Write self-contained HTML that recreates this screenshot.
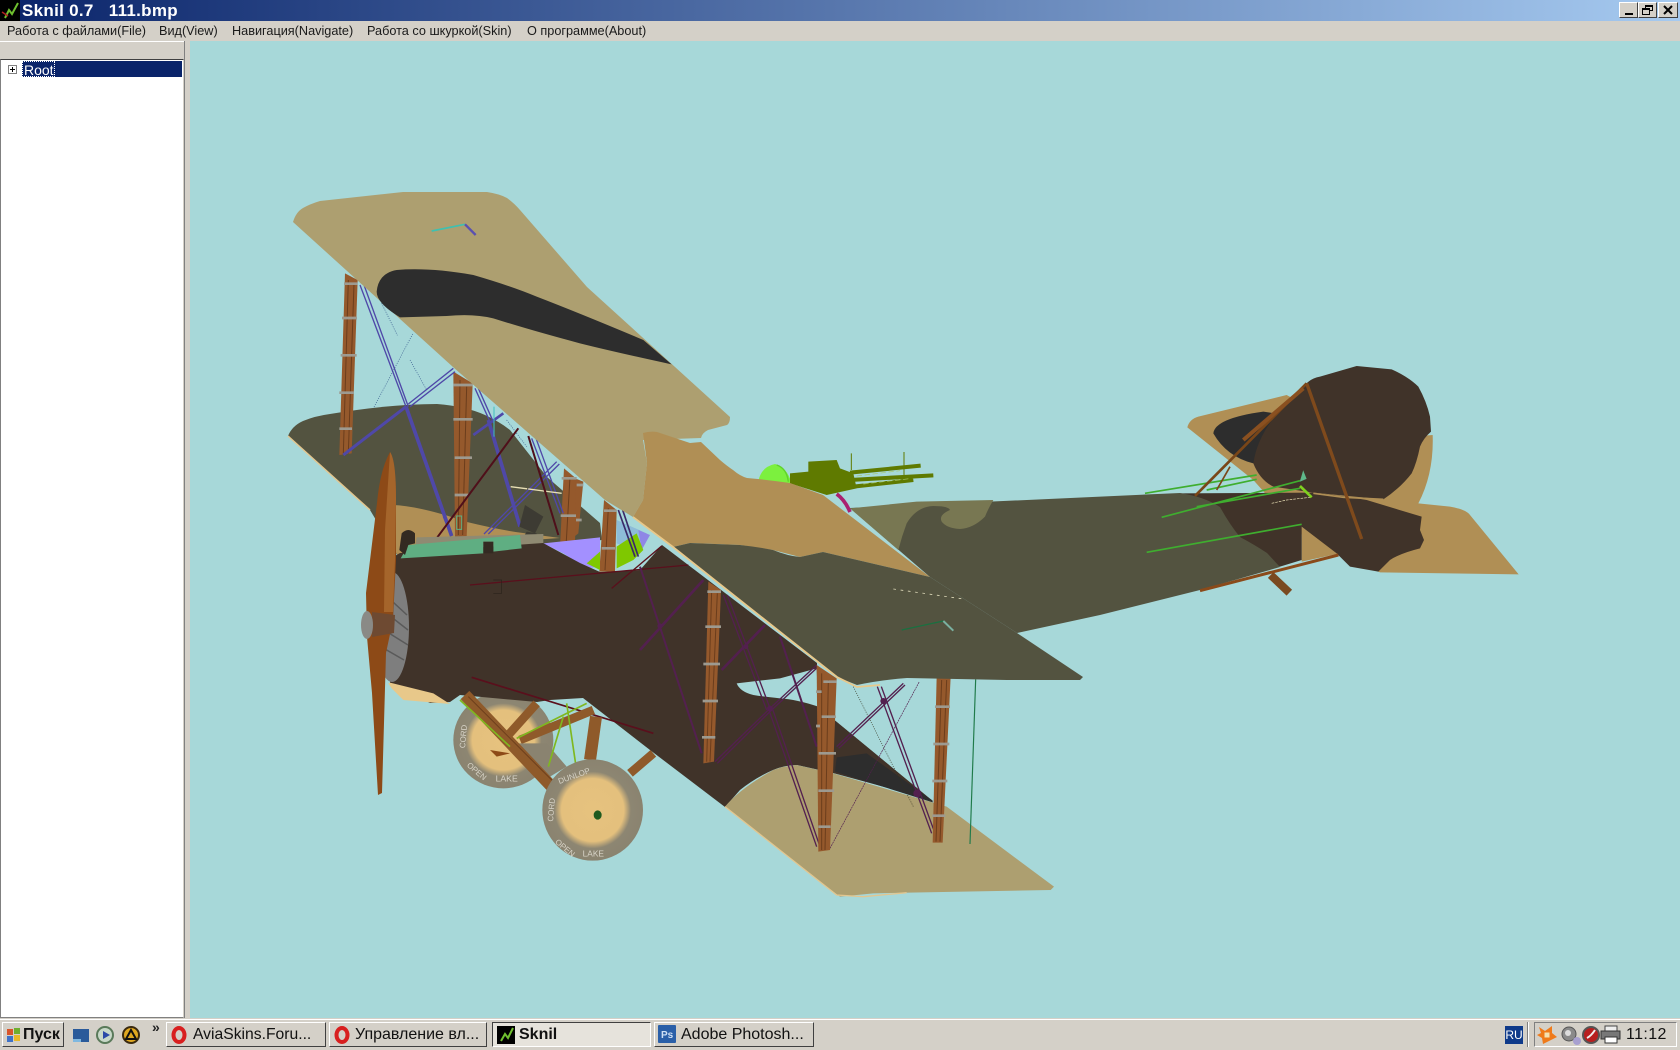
<!DOCTYPE html>
<html lang="ru"><head><meta charset="utf-8"><title>Sknil 0.7</title>
<style>
html,body{margin:0;padding:0;width:1680px;height:1050px;overflow:hidden;background:#d4d0c8;font-family:"Liberation Sans","DejaVu Sans",sans-serif}
.a{position:absolute;white-space:nowrap}
#title{left:0;top:0;width:1680px;height:21px}
#title b{position:absolute;left:22px;top:1px;color:#fff;font-size:17px;letter-spacing:.3px;line-height:20px;white-space:pre}
.wb{position:absolute;top:2px;width:19px;height:16px;background:#d4d0c8;border:1px solid;border-color:#fff #404040 #404040 #fff;box-sizing:border-box}
.m{position:absolute;top:22px;font-size:12.7px;line-height:18px;color:#1a1a1a}
.task{position:absolute;top:1022px;height:25px;box-sizing:border-box;background:#d4d0c8;border:1px solid;border-color:#fff #404040 #404040 #fff;font-size:16px;line-height:24px;color:#111;white-space:nowrap}
.task span{position:absolute;top:0}
</style></head><body>
<svg class="a" style="left:0;top:0" width="1680" height="1050" viewBox="0 0 1680 1050" xmlns="http://www.w3.org/2000/svg">
<rect x="190" y="41" width="1490" height="977" fill="#a7d8d9"/>

<!-- tail far stabiliser + fin -->
<g transform="translate(1100 340) scale(.33333)">
<path d="M262 262Q268 238 295 230L560 165L800 300L998 285Q1002 400 955 490L1050 500Q1098 508 1110 525L1256 703L840 697L700 640L605 560L620 600L460 420Z" fill="#b08f55"/>
<path d="M605 560L710 642L605 665Z" fill="#b08f55"/>
<path d="M340 280Q345 235 490 215L525 220L460 370Q380 350 340 280Z" fill="#2d2d2d"/>
<path d="M460 370Q470 300 520 235Q565 180 610 140Q630 115 660 110L770 78L875 88Q925 110 955 140Q980 185 990 230L993 275Q970 295 960 320Q950 370 935 400Q900 445 850 478L640 458L520 440Q480 420 460 370Z" fill="#403329"/>
<path d="M240 460L640 458Q730 468 800 480L965 530L960 570L972 600L960 625Q900 640 870 660L835 695L750 680L710 640L605 560L605 660L540 680L300 560Z" fill="#403329"/>
<path d="M640 460L730 472L850 478" fill="none" stroke="#b08f55" stroke-width="5"/>
</g>

<!-- gun + sphere -->
<g transform="translate(640 420) scale(.33333)">
<path d="M356 180Q365 140 405 132Q440 140 455 190L356 190Z" fill="#7cf03e"/>
<path d="M410 135Q440 145 445 185" fill="none" stroke="#5fd22a" stroke-width="4"/>
<path d="M450 160L505 155L505 125L590 120L600 145L640 160L650 205L560 225L450 190Z" fill="#5f7a00"/>
<path d="M630 158L842 137M630 180L880 166M640 200L820 180" stroke="#5f7a00" stroke-width="12" fill="none"/>
<path d="M792 96V180M634 100V150" stroke="#5f7a00" stroke-width="3" fill="none"/>
<path d="M650 168L780 152M670 192L810 176" stroke="#a7c86c" stroke-width="2" stroke-dasharray="16 8" fill="none"/>
<path d="M590 222Q615 240 630 276" stroke="#aa2070" stroke-width="11" fill="none"/>
</g>

<!-- rear fuselage olive -->
<path d="M850 508L1180 493Q1205 497 1220 507Q1230 525 1240 537Q1255 545 1267 553L1280 567L1200 590L1100 615L1017 633L930 577Z" fill="#535340"/>
<g transform="translate(640 420) scale(.33333)">
<path d="M630 265L830 245L1060 240Q1045 265 1035 290Q1000 325 960 327Q920 325 905 305Q895 285 930 270Q925 258 880 258Q830 260 800 310Q785 350 775 390Z" fill="#787752"/>
</g>
<!-- tail lines -->
<g transform="translate(1100 340) scale(.33333)" fill="none" stroke-linecap="butt">
<path d="M135 460L470 405M320 450L470 418M185 532L600 422M290 500L600 445M140 637L605 553" stroke="#3fae2f" stroke-width="5"/>
<path d="M600 438L635 472" stroke="#7fd01f" stroke-width="8"/>
<path d="M610 400L616 415L604 420Z" fill="#5fb88a" stroke="#5fb88a" stroke-width="6"/>
<path d="M515 490L560 480L630 472" stroke="#e8dfb5" stroke-width="2" stroke-dasharray="8 3"/>
<path d="M285 468L620 130" stroke="#7a4618" stroke-width="8"/>
<path d="M430 300L610 145" stroke="#8a5020" stroke-width="12"/>
<path d="M350 450L390 380" stroke="#7a4618" stroke-width="5"/>
<path d="M620 130L785 597" stroke="#7f4a1c" stroke-width="10"/>
<path d="M512 705L568 758" stroke="#7a4a20" stroke-width="24"/>
<path d="M300 752L715 645" stroke="#8a4a1a" stroke-width="9"/>
</g>

<!-- far lower wing -->
<path d="M288 436Q292 426 303 421Q315 416 330 414Q390 404 437 404Q465 406 485 415Q500 422 510 430L547 477L600 523L602 540L400 560L370 510Z" fill="#535340"/>
<path d="M288 436L370 510" stroke="#e2c68f" stroke-width="1.5"/>
<path d="M393 505Q420 506 467 522Q500 530 523 533L560 538L463 545L400 560L393 547Z" fill="#b08f55"/>

<!-- far struts + wires -->
<g transform="translate(280 180) scale(.33333)">
<g fill="#95592c">
<path d="M195 280L233 300L215 820L178 825Z"/>
<path d="M520 575L578 610L560 1070L525 1070Z"/>
<path d="M885 895L910 905L895 1060L870 1080Z"/>
<path d="M852 865L888 895L885 1100L840 1100Z"/>
<path d="M972 960L1010 990L1005 1175L958 1175Z"/>
</g>
<path d="M205 300L190 820M222 310L205 820M540 600L535 1065M560 620L548 1065M870 890L858 1100M985 985L975 1170" stroke="#6b3d1c" stroke-width="3" fill="none"/>
<path d="M192 311H233M186 414H231M182 526H230M178 638H222M178 746H216M520 615H578M520 718H578M524 833H576M524 945H565M845 895H890M842 1007H888M840 1108H885M890 915H910M888 1020H905M972 992H1010M965 1105H1005" stroke="#9d9a90" stroke-width="8" fill="none"/>
<g fill="none" stroke="#4f48a8">
<path d="M240 315L378 680M252 315L385 680" stroke-width="4"/>
<path d="M378 680L515 1068" stroke-width="11"/>
<path d="M378 680L190 825" stroke-width="9"/>
<path d="M385 672L520 565M390 680L525 575" stroke-width="4"/>
<path d="M585 625L632 730M595 625L642 730" stroke-width="4"/>
<path d="M625 720L720 1040" stroke-width="11"/>
<path d="M580 765L670 700" stroke-width="8"/>
<path d="M612 1062L830 845M625 1062L838 852" stroke-width="4"/>
<path d="M755 775L840 1000M768 775L850 1000" stroke-width="4"/>
<path d="M490 1010L515 1068" stroke-width="4"/>
<path d="M305 370L352 466M398 462L280 685M390 540L440 630M680 720L740 800" stroke="#33558a" stroke-width="2" stroke-dasharray="3 4"/>
</g>
<path d="M642 680V770" stroke="#3fc0c0" stroke-width="3"/>
<path d="M692 920L845 940" stroke="#e8dfb5" stroke-width="4" stroke-dasharray="50 3"/>
<path d="M715 745L472 1072M745 768L835 1065" stroke="#4f0f1a" stroke-width="6" fill="none"/>
<path d="M735 975L790 1010L765 1060L718 1040Z" fill="#3d3b33"/>
<path d="M728 1075L740 1055L770 1060L770 1075Z" fill="#3d3b33"/>
<path d="M530 1008L545 1008V1048H530Z" fill="none" stroke="#5fae82" stroke-width="3"/>
<path d="M790 1090L960 1072L960 1160L920 1165L850 1120Z" fill="#a390ff"/>
<path d="M920 1150L960 1115V1170Z" fill="#7fc800"/>
<path d="M1010 1020L1100 1060L1060 1110L1010 1090Z" fill="#8dbcd8"/>
<path d="M1075 1050L1110 1065L1085 1110Z" fill="#8f86e6"/>
<path d="M1010 1100L1070 1060L1090 1110L1060 1140L1010 1165Z" fill="#7fc800"/>
<path d="M1015 990L1065 1130M1028 990L1075 1130" stroke="#3a2a68" stroke-width="5" fill="none"/>
<path d="M410 1072L790 1062L790 1090L400 1130Z" fill="#8f8a72"/>
</g>

<!-- back wheel -->
<g transform="translate(350 560) scale(.33333)">
<defs><radialGradient id="w0" cx=".5" cy=".5" r=".5"><stop offset="0" stop-color="#e6c27e"/><stop offset=".62" stop-color="#e4c07d"/><stop offset=".76" stop-color="#8d8672"/><stop offset="1" stop-color="#8a8370"/></radialGradient></defs>
<ellipse cx="460" cy="540" rx="150" ry="145" fill="url(#w0)"/>
<text x="470" y="665" font-size="26" fill="#d8d4c8" text-anchor="middle" font-family="Liberation Sans">LAKE</text>
</g>

<!-- fuselage / near lower wing brown -->
<path d="M393 557L400 553L543 543L580 563L600 572L640 570L662 545L817 663L817 707L837 722L932 800L833 773L797 765Q785 765 773 770Q755 778 740 790L725 807L650 750L583 698L550 700L537 702L460 695L450 702L430 703L410 693L390 683Z" fill="#403329"/>
<g transform="translate(640 420) scale(.33333)">
<path d="M290 790L420 775L530 745L535 860Q470 838 420 835Q370 830 340 825Q300 815 290 790Z" fill="#a7d8d9"/>
<path d="M590 790L930 790L875 1140L590 905Z" fill="#a7d8d9"/>
<path d="M255 1160Q300 1105 400 1050Q430 1038 470 1035L580 1060L920 1160L1242 1400L1232 1410L700 1420L600 1430L560 1400Z" fill="#ad9f70"/>
<path d="M255 1160L590 1425L670 1430L800 1418" stroke="#e2c68f" stroke-width="4" fill="none"/>
<path d="M585 1055L590 1012L680 1000L878 1142L878 1147Z" fill="#2d2d2d"/>
</g>

<!-- instrument strip -->
<g transform="translate(280 180) scale(.33333)">
<path d="M385 1095L720 1065L725 1105L640 1115L640 1085L610 1085L610 1120L362 1135Z" fill="#5fae82"/>
<path d="M365 1060Q385 1040 405 1060V1090L385 1095L375 1125L358 1110Z" fill="#332a22"/>
<path d="M610 1085H640V1120H610Z" fill="#332a22"/>
<path d="M570 1215L1225 1155M995 1225L1145 1098" stroke="#5a0f1c" stroke-width="4" fill="none"/>
<path d="M640 1200H665V1240H640" stroke="#2b231b" stroke-width="2" fill="none"/>
</g>

<!-- near struts + wires -->
<g transform="translate(640 420) scale(.33333)">
<g fill="none" stroke="#53204f">
<path d="M0 440L185 1000" stroke-width="6"/>
<path d="M190 480L0 690" stroke-width="8"/>
<path d="M375 615L245 750" stroke-width="8"/>
<path d="M250 525L380 870M262 525L392 870" stroke-width="4"/>
<path d="M385 865L530 1280M397 865L540 1280" stroke-width="4"/>
<path d="M420 650L530 980" stroke-width="6"/>
<path d="M225 1025L390 865L530 735M232 1030L395 870L535 740" stroke-width="4"/>
<path d="M590 980L790 790M596 985L795 795" stroke-width="4"/>
<path d="M712 800L875 1240M724 800L885 1240" stroke-width="4"/>
<path d="M570 1285L838 785" stroke-width="2" stroke-dasharray="6 2"/>
<path d="M640 800L820 1160" stroke="#33331f" stroke-width="2" stroke-dasharray="3 4"/>
</g>
<circle cx="730" cy="843" r="9" fill="#53204f"/>
<circle cx="390" cy="866" r="9" fill="#53204f"/>
<circle cx="60" cy="618" r="8" fill="#53204f"/>
<circle cx="318" cy="680" r="7" fill="#53204f"/>
<circle cx="832" cy="1120" r="12" fill="#53204f"/>
<g fill="#95592c">
<path d="M205 485L243 510L222 1025L190 1030Z"/>
<path d="M530 735L590 775L570 1290L535 1295Z"/>
<path d="M890 770L932 770L908 1268L878 1268Z"/>
</g>
<path d="M215 510L200 1025M232 520L210 1025M545 760L545 1290M565 780L555 1290M905 780L888 1265M920 780L900 1265" stroke="#6b3d1c" stroke-width="3" fill="none"/>
<path d="M202 515H243M196 620H243M190 732H240M188 843H234M186 952H226M550 785H590M545 890H588M536 1000H588M535 1112H582M535 1220H572M528 815H545M528 918H540M885 860H930M880 972H928M877 1083H922M877 1187H916" stroke="#9d9a90" stroke-width="8" fill="none"/>
<path d="M1007 778L990 1272" stroke="#1f7a4a" stroke-width="3.5"/>
</g>

<!-- upper wing -->
<path d="M293 222Q296 212 303 208Q310 204 320 201L403 192L487 192Q500 194 507 198Q514 203 520 210L587 287L730 417Q730 423 727 425L708 430Q702 433 701 438L643 440L647 463L643 500L633 517L605 500L453 367Z" fill="#ad9f70"/>
<path d="M643 433Q650 431 657 432L690 443L701 442L720 460Q727 466 733 470Q740 476 747 478Q770 480 790 483L823 495L930 577L823 552L800 557L773 550L740 545L690 543L673 547L633 517L643 500L647 463Z" fill="#b08f55"/>
<path d="M673 547L690 543L740 545Q758 547 773 550Q788 556 800 557L823 552L930 577L1017 633L1083 677L1080 680L1007 680L907 678Q880 680 857 685L837 677Z" fill="#535340"/>
<path d="M633 517L673 547L837 677L857 687L880 685" stroke="#e8c88a" stroke-width="1.8" fill="none"/>
<g transform="translate(280 180) scale(.33333)">
<path d="M290 335Q295 280 350 270Q450 262 580 285Q700 320 770 350Q900 400 1090 480L1175 553Q1000 515 900 490Q750 450 640 415Q580 400 500 408L360 412Q290 370 290 335Z" fill="#2d2d2d"/>
<path d="M455 153L555 133" stroke="#3fc0b0" stroke-width="5"/>
<path d="M555 133L587 165" stroke="#5a50b0" stroke-width="7"/>
</g>
<g transform="translate(640 420) scale(.33333)">
<path d="M760 507L970 537" stroke="#dcd8b8" stroke-width="2.5" stroke-dasharray="8 14"/>
<path d="M785 630L910 603" stroke="#1a7040" stroke-width="4"/>
<path d="M910 603L940 632" stroke="#7ab0a0" stroke-width="6"/>
</g>

<!-- lower nose + gear + front wheel -->
<g transform="translate(350 560) scale(.33333)">
<path d="M115 370L125 385L160 420L300 432L250 400L120 368Z" fill="#e8c88a"/>
<path d="M365 352L910 520" stroke="#5a0f1c" stroke-width="5"/>
<path d="M840 640L910 580" stroke="#8f5a2a" stroke-width="26"/>
<path d="M720 600L738 470" stroke="#8f5a2a" stroke-width="36"/>
<path d="M510 540L730 450" stroke="#8f5a2a" stroke-width="26"/>
<path d="M475 525L560 430" stroke="#8f5a2a" stroke-width="26"/>
<path d="M470 550L590 550L650 620L600 650Z" fill="#8a8370"/>
<path d="M345 405L605 680" stroke="#8f5a2a" stroke-width="36"/>
<path d="M355 410L615 670" stroke="#6d3f1c" stroke-width="3"/>
<path d="M420 570L480 580L440 590Z" fill="#8d4a17"/>
<path d="M330 420L480 560M500 535L710 430M650 430L677 612M640 470L595 620" stroke="#7fb81f" stroke-width="5" fill="none"/>
<ellipse cx="728" cy="750" rx="151" ry="152" fill="url(#w0)"/>
<ellipse cx="743" cy="765" rx="12" ry="14" fill="#1f5a1f"/>
<text x="730" y="890" font-size="25" fill="#d8d4c8" text-anchor="middle" font-family="Liberation Sans">LAKE</text>
<text x="640" y="870" font-size="24" fill="#d8d4c8" text-anchor="middle" transform="rotate(40 640 870)" font-family="Liberation Sans">OPEN</text>
<text x="612" y="750" font-size="24" fill="#d8d4c8" text-anchor="middle" transform="rotate(-85 612 750)" font-family="Liberation Sans">CORD</text>
<text x="675" y="655" font-size="24" fill="#d8d4c8" text-anchor="middle" transform="rotate(-20 675 655)" font-family="Liberation Sans">DUNLOP</text>
<text x="375" y="640" font-size="24" fill="#d8d4c8" text-anchor="middle" transform="rotate(40 375 640)" font-family="Liberation Sans">OPEN</text>
<text x="348" y="530" font-size="24" fill="#d8d4c8" text-anchor="middle" transform="rotate(-85 348 530)" font-family="Liberation Sans">CORD</text>
</g>

<!-- engine disc + prop -->
<ellipse cx="392" cy="627" rx="17" ry="55" fill="#7e7e7e"/>
<path d="M380 590L407 615M376 605L408 630M376 625L408 645M378 645L404 660" stroke="#5a5a5a" stroke-width="1.5" fill="none"/>
<path d="M390 452Q396 460 396 500L396 560L393 620L386 653L382 793L378 795L372 693L367 637L366 593L377 503Q380 470 390 452Z" fill="#8d4a17"/>
<path d="M390 452Q396 460 396 500L395 560L393 612L384 612L385 530Z" fill="#a5652b"/>
<path d="M372 612L395 615L394 633L372 637Z" fill="#6e4a32"/>
<ellipse cx="367" cy="625" rx="6" ry="14" fill="#8a8a86"/>
</svg>

<div class="a" id="title" style="background:linear-gradient(90deg,#0a246a 0%,#a6caf0 100%)"><svg class="a" style="left:0;top:0" width="20" height="21"><rect width="20" height="21" fill="#000"/><path d="M5 18L9 10L12 14L18 3" stroke="#6fc02f" stroke-width="2" fill="none"/><path d="M2 12L8 16" stroke="#b02020" stroke-width="1.5"/></svg><b>Sknil 0.7   111.bmp</b>
<div class="wb" style="left:1619px"><div class="a" style="left:5px;top:10px;width:8px;height:2px;background:#000"></div></div>
<div class="wb" style="left:1638px"><div class="a" style="left:6px;top:2px;width:8px;height:6px;border:1px solid #000;border-top-width:2px;box-sizing:border-box"></div><div class="a" style="left:3px;top:5px;width:8px;height:7px;border:1px solid #000;border-top-width:2px;box-sizing:border-box;background:#d4d0c8"></div></div>
<div class="wb" style="left:1658px;width:20px"><svg class="a" style="left:4px;top:2px" width="10" height="10"><path d="M1 1L9 9M9 1L1 9" stroke="#000" stroke-width="2"/></svg></div>
</div>

<span class="m" style="left:7px">Работа с файлами(File)</span>
<span class="m" style="left:159px">Вид(View)</span>
<span class="m" style="left:232px">Навигация(Navigate)</span>
<span class="m" style="left:367px">Работа со шкуркой(Skin)</span>
<span class="m" style="left:527px">О программе(About)</span>

<div class="a" style="left:0;top:41px;width:185px;height:1px;background:#fff"></div>
<div class="a" style="left:184px;top:41px;width:1px;height:977px;background:#808080"></div>
<div class="a" style="left:0;top:59px;width:184px;height:959px;background:#fff;box-sizing:border-box;border:1px solid;border-color:#404040 #d4d0c8 #808080 #808080"></div>
<div class="a" style="left:22px;top:61px;width:160px;height:16px;background:#0a246a"></div>
<div class="a" style="left:22px;top:61px;width:33px;height:16px;box-sizing:border-box;border:1px dotted #fff"></div>
<span class="a" style="left:24px;top:62px;color:#fff;font-size:14px;line-height:16px">Root</span>
<div class="a" style="left:8px;top:65px;width:9px;height:9px;box-sizing:border-box;border:1px solid #808080;background:#fff"></div>
<div class="a" style="left:10px;top:69px;width:5px;height:1px;background:#000"></div>
<div class="a" style="left:12px;top:67px;width:1px;height:5px;background:#000"></div>

<!-- taskbar -->
<div class="a" style="left:0;top:1018px;width:1680px;height:32px;background:#d4d0c8"></div>
<div class="a" style="left:0;top:1019px;width:1680px;height:1px;background:#fff"></div>
<div class="task" style="left:2px;width:62px;font-weight:bold;font-size:16px"><span style="left:20px">Пуск</span>
<svg class="a" style="left:3px;top:4px" width="15" height="16"><rect x="1" y="2" width="6" height="6" fill="#d8552a"/><rect x="8" y="1" width="6" height="6" fill="#6fae2f"/><rect x="1" y="9" width="6" height="6" fill="#3f72c8"/><rect x="8" y="8" width="6" height="6" fill="#e8b82a"/></svg></div>
<svg class="a" style="left:70px;top:1022px" width="90" height="26">
<rect x="3" y="7" width="16" height="13" fill="#2a5a9a"/><rect x="3" y="17" width="8" height="3" fill="#7fb8e0"/>
<circle cx="35" cy="13" r="8" fill="#c8d8c8" stroke="#5a7a5a" stroke-width="2"/><path d="M33 9L40 13L33 17Z" fill="#2a4aa8"/>
<circle cx="61" cy="13" r="8" fill="#e0a820" stroke="#3a2a10" stroke-width="2"/><path d="M61 8L56 17H66Z" fill="none" stroke="#111" stroke-width="2"/>
</svg>
<span class="a" style="left:152px;top:1019px;font-size:14px;font-weight:bold;color:#222">»</span>

<div class="task" style="left:166px;width:160px"><svg class="a" style="left:4px;top:3px" width="16" height="18"><ellipse cx="8" cy="9" rx="5.5" ry="7" fill="none" stroke="#d81f1f" stroke-width="4"/></svg><span style="left:26px;font-size:15.7px">AviaSkins.Foru...</span></div>
<div class="task" style="left:329px;width:158px"><svg class="a" style="left:4px;top:3px" width="16" height="18"><ellipse cx="8" cy="9" rx="5.5" ry="7" fill="none" stroke="#d81f1f" stroke-width="4"/></svg><span style="left:25px">Управление вл...</span></div>
<div class="task" style="left:492px;width:159px;border-color:#404040 #fff #fff #404040;background:#e6e3dc;font-weight:bold"><svg class="a" style="left:4px;top:3px" width="18" height="18"><rect width="18" height="18" fill="#000"/><path d="M4 15L8 8L11 12L16 2" stroke="#6fc02f" stroke-width="2" fill="none"/></svg><span style="left:26px">Sknil</span></div>
<div class="task" style="left:654px;width:160px"><svg class="a" style="left:3px;top:2px" width="18" height="18"><rect width="18" height="18" rx="1" fill="#2a5fa8"/><text x="3" y="13" font-size="10" font-weight="bold" fill="#cfe0f4" font-family="Liberation Sans">Ps</text></svg><span style="left:26px">Adobe Photosh...</span></div>

<div class="a" style="left:1505px;top:1026px;width:18px;height:18px;background:#0f3a8a;color:#fff;font-size:12px;line-height:18px;text-align:center">RU</div>
<div class="a" style="left:1527px;top:1022px;width:1px;height:25px;background:#808080;border-right:1px solid #fff"></div>
<div class="a" style="left:1534px;top:1022px;width:143px;height:25px;box-sizing:border-box;border:1px solid;border-color:#808080 #fff #fff #808080"></div>
<svg class="a" style="left:1535px;top:1024px" width="90" height="22">
<path d="M4 3L10 7L17 2L17 9L22 13L16 16L8 20L7 14L2 11L6 9Z" fill="#ef7a1a"/><rect x="9" y="8" width="6" height="6" fill="#f4e0b0" stroke="#ef7a1a"/>
<circle cx="34" cy="10" r="7" fill="#8a8a8a" stroke="#555"/><circle cx="33" cy="9" r="3" fill="#ddd"/><circle cx="42" cy="17" r="4" fill="#a8a0d0"/>
<circle cx="56" cy="11" r="8" fill="#b81f1f" stroke="#555" stroke-width="2"/><path d="M52 14Q56 12 60 6" stroke="#eee" stroke-width="2" fill="none"/>
<rect x="70" y="2" width="12" height="6" fill="#eee" stroke="#444"/><rect x="66" y="7" width="19" height="8" fill="#777" stroke="#333"/><rect x="70" y="13" width="12" height="6" fill="#fff" stroke="#333"/>
</svg>
<span class="a" style="left:1626px;top:1025px;font-size:16px;line-height:19px;color:#111;letter-spacing:.4px">11:12</span>
</body></html>
